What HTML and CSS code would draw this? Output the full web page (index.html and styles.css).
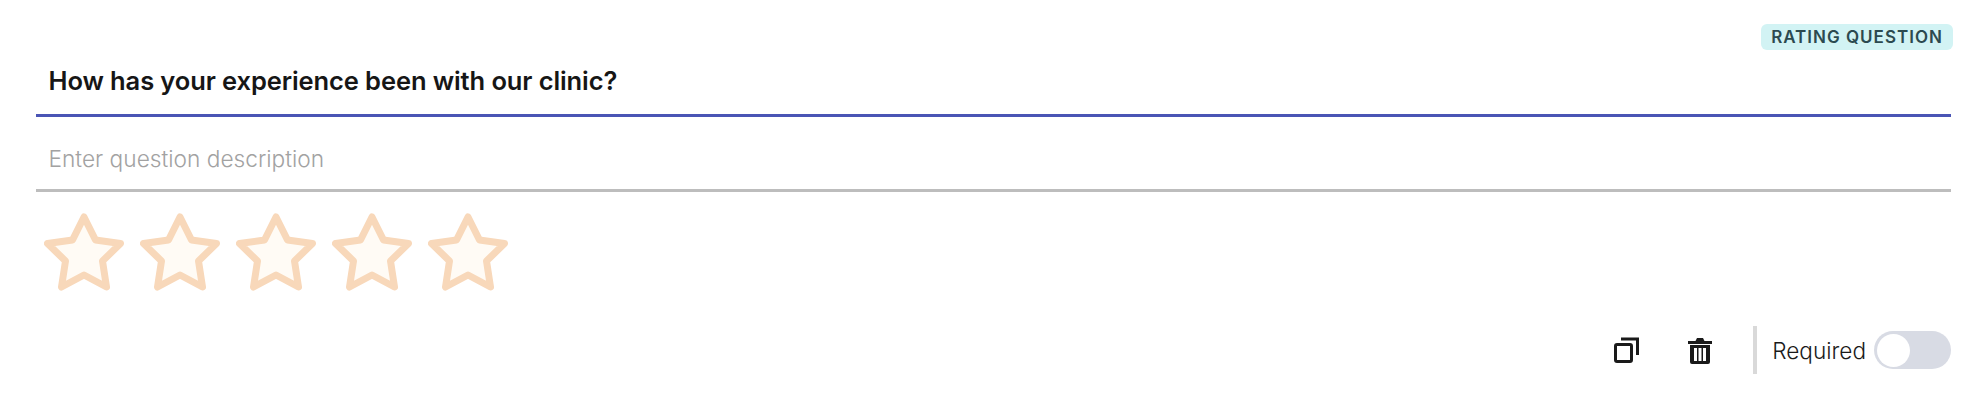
FILE: index.html
```html
<!DOCTYPE html>
<html lang="en">
<head>
<meta charset="utf-8">
<title>Rating question</title>
<link rel="stylesheet" href="styles.css">
</head>
<body>
<main class="card">
  <div class="badge-row"><span class="badge">RATING QUESTION</span></div>
  <div class="field field-title"><span class="title">How has your experience been with our clinic?</span></div>
  <div class="field field-desc"><span class="desc">Enter question description</span></div>
  <div class="stars">
    <svg class="star" viewBox="0 0 80 77"><path d="M40 3.5 L51.5 26.5 L76.5 30 L58.5 47.5 L62.5 73.5 L40 61.5 L17.5 73.5 L21.5 47.5 L3.5 30 L28.5 26.5 Z"/></svg>
    <svg class="star" viewBox="0 0 80 77"><path d="M40 3.5 L51.5 26.5 L76.5 30 L58.5 47.5 L62.5 73.5 L40 61.5 L17.5 73.5 L21.5 47.5 L3.5 30 L28.5 26.5 Z"/></svg>
    <svg class="star" viewBox="0 0 80 77"><path d="M40 3.5 L51.5 26.5 L76.5 30 L58.5 47.5 L62.5 73.5 L40 61.5 L17.5 73.5 L21.5 47.5 L3.5 30 L28.5 26.5 Z"/></svg>
    <svg class="star" viewBox="0 0 80 77"><path d="M40 3.5 L51.5 26.5 L76.5 30 L58.5 47.5 L62.5 73.5 L40 61.5 L17.5 73.5 L21.5 47.5 L3.5 30 L28.5 26.5 Z"/></svg>
    <svg class="star" viewBox="0 0 80 77"><path d="M40 3.5 L51.5 26.5 L76.5 30 L58.5 47.5 L62.5 73.5 L40 61.5 L17.5 73.5 L21.5 47.5 L3.5 30 L28.5 26.5 Z"/></svg>
  </div>
  <footer class="footer">
    <svg class="icon icon-copy" viewBox="0 0 25 26"><rect x="1.5" y="7.5" width="16" height="17" rx="1.5"/><path d="M7 2 H23.5 V18"/></svg>
    <svg class="icon icon-trash" viewBox="0 0 24 27"><path class="solid" d="M0 4 H7.5 L9 1 H15 L16.5 4 H24 V7 H0 Z"/><path class="solid" fill-rule="evenodd" d="M2 8 H22 V25 Q22 27 20 27 H4 Q2 27 2 25 Z M6 11 V24 H9 V11 Z M10.5 11 V24 H13.5 V11 Z M15 11 V24 H18 V11 Z"/></svg>
    <span class="divider"></span>
    <span class="req-label">Required</span>
    <span class="toggle"><span class="knob"></span></span>
  </footer>
</main>
</body>
</html>
```
FILE: styles.css
```css
* { box-sizing: border-box; }
html, body { margin: 0; background: #fff; }
body { font-family: Inter, "Noto Sans", sans-serif; color: #1a1a1a; }
.card { width: 1986px; height: 408px; padding: 24px 35px 0 36px; display: flex; flex-direction: column; }
.badge-row { display: flex; justify-content: flex-end; margin-right: -2px; }
.badge { height: 26px; width: 192px; display: flex; align-items: center; justify-content: center; background: #d2f3f4; border-radius: 6px; color: #2c4a50; font-size: 17px; font-weight: 600; letter-spacing: 1px; white-space: nowrap; }
.field { display: flex; align-items: center; padding-left: 12.5px; border-bottom: 3px solid; }
.field-title { height: 67px; border-color: #4a55b5; padding-bottom: 3px; }
.field-desc { height: 75px; border-color: #bdbdbd; padding-top: 11px; }
.title { font-size: 25.5px; font-weight: 600; color: #161616; letter-spacing: -0.1px; }
.desc { font-size: 22.7px; font-weight: 300; color: #a2a2a2; }
.stars { display: flex; gap: 16px; margin: 21px 0 0 8px; }
.star { width: 80px; height: 78px; display: block; }
.star path { fill: #fffbf5; stroke: #f8d8ba; stroke-width: 7; stroke-linejoin: round; }
.footer { display: flex; align-items: center; justify-content: flex-end; margin-top: 35px; height: 48px; }
.icon { display: block; }
.icon-copy { width: 25px; height: 26px; fill: none; stroke: #1a1a1a; stroke-width: 3; }
.icon-trash { width: 24px; height: 27px; margin-left: 49px; margin-right: 41px; }
.solid { fill: #1a1a1a; }
.divider { width: 4px; height: 48px; background: #d9d9d9; }
.req-label { font-size: 22.6px; font-weight: 300; margin-left: 15px; margin-right: 8px; color: #1a1a1a; }
.toggle { width: 77px; height: 38px; border-radius: 19px; background: #d8dbe4; display: flex; align-items: center; padding-left: 3px; }
.knob { width: 33px; height: 33px; border-radius: 50%; background: #fff; }
```
